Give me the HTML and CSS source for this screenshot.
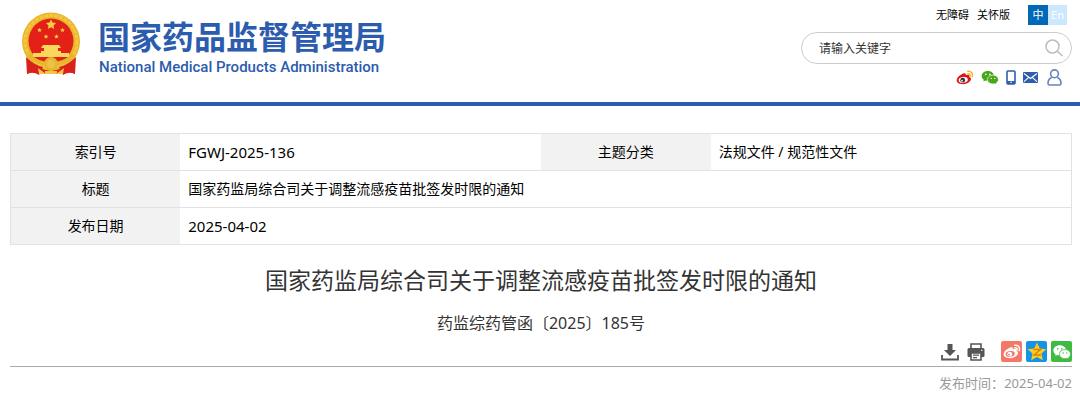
FILE: index.html
```html
<!DOCTYPE html>
<html lang="zh-CN">
<head>
<meta charset="utf-8">
<meta name="viewport" content="width=device-width, initial-scale=1">
<title>国家药监局综合司关于调整流感疫苗批签发时限的通知</title>
<link rel="stylesheet" href="styles.css">
</head>
<body>
<svg width="0" height="0" class="defs" aria-hidden="true">
  <symbol id="weibo" viewBox="0 0 20 18">
    <path d="M8 4c2-1 3.500 0 2.800 2 3-1.200 4.800-.3 4 1.800 2 .6 2.600 2.400 1.200 4.400-2 2.900-6.500 4.300-10.500 3.600C1.800 15.100 0 12.800.8 10.300 1.700 7.600 5 5 8 4z" fill="var(--body)"/>
    <ellipse cx="8" cy="11.200" rx="5.200" ry="3.300" fill="var(--gap)" transform="rotate(-8 8 11.200)"/>
    <circle cx="7.400" cy="11.400" r="2.700" fill="var(--eye)"/>
    <circle cx="6.600" cy="12" r="1" fill="var(--gap)"/>
    <path d="M13.200 1.500c3.500-.6 6 2.300 5 5.900M13.300 4.300c1.700-.2 2.700.9 2.300 2.600" fill="none" stroke="var(--wave)" stroke-width="1.700" stroke-linecap="round"/>
  </symbol>
  <symbol id="wechat" viewBox="0 0 20 17">
    <path d="M7.500 1C3.500 1 .5 3.500.5 6.700c0 1.800 1 3.300 2.500 4.400L2.400 13l2.400-1.200c.9.300 1.800.4 2.700.4 4 0 7-2.400 7-5.500S11.500 1 7.500 1z" fill="var(--fg)"/>
    <path d="M13.400 5.800c-3.600 0-6.300 2.200-6.300 5.100s2.700 5 6.300 5c.8 0 1.500-.1 2.200-.3l2.100 1-.6-1.700c1.500-1 2.400-2.300 2.400-4 0-2.900-2.600-5.100-6.100-5.100z" fill="var(--fg)" stroke="var(--gap)" stroke-width=".8"/>
    <g fill="var(--gap)"><circle cx="5.200" cy="5" r=".9"/><circle cx="9.800" cy="5" r=".9"/><circle cx="11.400" cy="9.500" r=".8"/><circle cx="15.400" cy="9.500" r=".8"/></g>
  </symbol>
  <symbol id="star" viewBox="-10 -10 20 20"><path d="M0-9.500 2.800-3.500 9.300-2.800 4.500 1.600 5.800 8.200 0 5-5.800 8.200-4.500 1.600-9.300-2.800-2.800-3.500z"/></symbol>
</svg>

<header class="header">
  <a class="brand" href="#">
    <svg class="emblem" viewBox="0 0 60 64" role="img" aria-label="国徽">
      <path d="M8 43 6 62q8-4 14 0h20q7-4 14 0l-2-19z" fill="#df241c"/>
      <circle cx="30" cy="29.500" r="29" fill="#e9b62b"/>
      <circle cx="30" cy="29.500" r="26" fill="none" stroke="#f3c840" stroke-width="3" stroke-dasharray="4 1"/>
      <circle cx="30" cy="29" r="22.500" fill="#e32119"/>
      <g fill="#f6ce40"><use href="#star" x="24.500" y="7" width="11" height="11"/><use href="#star" x="16" y="15.500" width="5" height="5"/><use href="#star" x="39" y="15.500" width="5" height="5"/><use href="#star" x="22.500" y="22" width="5" height="5"/><use href="#star" x="33" y="22" width="5" height="5"/></g>
      <path d="M22 33h16l2 3H20zM23 36h14v3H23zM20 39h20v3H20zM12 41h36v4H12z" fill="#f9d75c"/>
      <path d="M10 45h40c-5 5-8 7-11 7H21c-4 0-8-3-11-7z" fill="#e32119"/>
      <path d="M7 43q9 9 23 9t23-9" fill="none" stroke="#e8b62d" stroke-width="4"/>
      <circle cx="30" cy="52" r="5.500" fill="#eec24a" stroke="#e8b62d" stroke-width="3"/>
      <path d="M5 45q8 8 17 10l-4 8q-6-4-12-1zM55 45q-8 8-17 10l4 8q6-4 12-1z" fill="#da211b"/>
      <path d="m17 56 8 6h-7zM43 56l-8 6h7zM24 59h12v3H24z" fill="#f3c744"/>
    </svg>
    <span class="brand-text">
      <span class="brand-cn">国家药品监督管理局</span>
      <span class="brand-en">National Medical Products Administration</span>
    </span>
  </a>
  <div class="tools">
    <nav class="top-links">
      <a href="#">无障碍</a>
      <a href="#">关怀版</a>
      <span class="lang"><a class="lang-cn" href="#">中</a><a class="lang-en" href="#">En</a></span>
    </nav>
    <form class="search">
      <input class="search-input" type="text" placeholder="请输入关键字" aria-label="请输入关键字">
      <button class="search-btn" type="button" aria-label="搜索">
        <svg width="18" height="18" viewBox="0 0 18 18" fill="none" stroke="#bcbcbc" stroke-width="1.500"><circle cx="7.500" cy="7.500" r="6.500"/><path d="m12 12 5.500 5"/></svg>
      </button>
    </form>
    <nav class="social">
      <a href="#" aria-label="微博"><svg class="weibo-red" width="18" height="16"><use href="#weibo"/></svg></a>
      <a href="#" aria-label="微信"><svg class="wechat-green" width="18" height="15"><use href="#wechat"/></svg></a>
      <a href="#" aria-label="手机"><svg width="10" height="15" viewBox="0 0 10 15"><rect x="1" y="1" width="8" height="13" rx="1" fill="#fff" stroke="#2b5fad" stroke-width="1.600"/><path d="M1 11h8v3H1z" fill="#2b5fad"/><circle cx="5" cy="12.300" r=".8" fill="#fff"/></svg></a>
      <a href="#" aria-label="邮箱"><svg width="15" height="11" viewBox="0 0 15 11"><rect width="15" height="11" rx="1" fill="#2b5fad"/><path d="m1 1.500 6.500 5 6.500-5M1 9.700l4.500-4M14 9.700l-4.500-4" fill="none" stroke="#fff" stroke-width="1.100"/></svg></a>
      <a class="user" href="#" aria-label="用户"><svg width="15" height="17" viewBox="0 0 15 17" fill="none" stroke="#6a83be" stroke-width="1.600"><circle cx="7.500" cy="4.800" r="3.900"/><path d="M4.700 8.500C2 9.700 1 12 1 14.300c0 1.200.5 1.700 1.500 1.700h10c1 0 1.500-.5 1.500-1.700 0-2.300-1-4.600-3.700-5.800"/></svg></a>
    </nav>
  </div>
</header>

<main class="main">
  <table class="info">
    <colgroup><col class="col-label"><col class="col-value"><col class="col-label"><col class="col-value"></colgroup>
    <tr><th scope="row">索引号</th><td class="latin">FGWJ-2025-136</td><th scope="row">主题分类</th><td>法规文件 / 规范性文件</td></tr>
    <tr><th scope="row">标题</th><td colspan="3">国家药监局综合司关于调整流感疫苗批签发时限的通知</td></tr>
    <tr><th scope="row">发布日期</th><td class="latin" colspan="3">2025-04-02</td></tr>
  </table>
  <h1 class="title">国家药监局综合司关于调整流感疫苗批签发时限的通知</h1>
  <p class="doc-no">药监综药管函〔2025〕185号</p>
  <div class="actions">
    <button class="action" type="button" aria-label="下载"><svg width="18" height="18" viewBox="0 0 18 18" fill="#555"><path d="M6.500 1h5v6H15l-6 6-6-6h3.500z"/><path d="M1 12v4.500h16V12" fill="none" stroke="#555" stroke-width="1.800"/></svg></button>
    <button class="action" type="button" aria-label="打印"><svg width="18" height="18" viewBox="0 0 18 18"><path d="M4 5V1h10v4" fill="#fff" stroke="#555" stroke-width="1.600"/><rect x=".5" y="5" width="17" height="9" rx="1.500" fill="#555"/><path d="M4 10h10v7H4z" fill="#fff" stroke="#555" stroke-width="1.600"/><path d="M6 12.200h6M6 14.600h4" stroke="#555" stroke-width="1.200"/><path d="M14 7.300h1.500" stroke="#fff"/></svg></button>
    <a class="share share-weibo" href="#" aria-label="分享到微博"><svg width="18" height="16"><use href="#weibo"/></svg></a>
    <a class="share share-qzone" href="#" aria-label="分享到QQ空间"><svg width="20" height="20" viewBox="-10 -10 20 20"><use href="#star" x="-10" y="-10" width="20" height="20" fill="#fdcb1e"/><path d="M-3.500-2.500H3.500L-3 3H4" fill="none" stroke="#d98208" stroke-width="1.400"/></svg></a>
    <a class="share share-wechat" href="#" aria-label="分享到微信"><svg width="18" height="16"><use href="#wechat"/></svg></a>
  </div>
  <p class="date">发布时间：<time datetime="2025-04-02">2025-04-02</time></p>
</main>
</body>
</html>
```
FILE: styles.css
```css
* { box-sizing: border-box; }
body {
  margin: 0;
  background: #fff;
  color: #000;
  font-family: "Noto Sans", "Noto Sans CJK SC", sans-serif;
  font-size: 14px;
}
a { color: inherit; text-decoration: none; }
button { padding: 0; border: 0; background: none; cursor: pointer; }
svg { display: block; }
.defs { position: absolute; }

.header {
  display: flex;
  justify-content: space-between;
  align-items: flex-start;
  padding: 5px 8px 16px 21px;
  border-bottom: 4px solid #2b5cad;
}
.brand { display: flex; gap: 17px; padding-top: 7px; color: #2b5cad; }
.emblem { width: 60px; height: 64px; }
.brand-text { display: flex; flex-direction: column; }
.brand-cn {
  font: bold 32px/46px "Noto Sans CJK SC", sans-serif;
}
.brand-en { padding-left: 1px; font: 500 15px/18px Roboto, sans-serif; }

.tools { width: 271px; }
.top-links {
  display: flex;
  justify-content: flex-end;
  gap: 8px;
  padding-right: 5px;
  font-size: 11px;
  line-height: 20px;
}
.lang { display: flex; margin-left: 10px; text-align: center; color: #fff; }
.lang-cn { width: 20px; background: #0068b7; }
.lang-en { width: 19px; background: #cce8ff; }
.search {
  display: flex;
  align-items: center;
  height: 32px;
  margin-top: 7px;
  padding: 0 8px 0 17px;
  border: 1px solid #ccc;
  border-radius: 16px;
}
.search-input {
  flex: 1;
  min-width: 0;
  padding: 0;
  border: 0;
  outline: 0;
  background: none;
  font: inherit;
  font-size: 12px;
}
.search-input::placeholder { color: #333; opacity: 1; }
.social {
  display: flex;
  justify-content: flex-end;
  align-items: center;
  gap: 7px;
  padding: 5px 10px 0 0;
}
.user { margin-left: 2px; }
.weibo-red { --body: #e2131a; --gap: #fff; --eye: #333; --wave: #f5b52c; }
.wechat-green { --fg: #46a818; --gap: #fff; }

.main { padding: 27px 8px 0 10px; }
.info {
  width: 100%;
  table-layout: fixed;
  border-collapse: collapse;
  border: 1px solid #e2e2e2;
}
.col-label { width: 16%; }
.col-value { width: 34%; }
.info tr { border-bottom: 1px solid #e2e2e2; }
.info th, .info td { height: 37px; padding: 0 8px; line-height: 24px; }
.info th { background: #f2f2f2; font-weight: normal; text-align: center; }
.info .latin { font-size: 15px; }

.title {
  margin: 18px 0 0;
  color: #333;
  font-size: 23px;
  font-weight: normal;
  line-height: 34px;
  text-align: center;
}
.doc-no {
  margin: 14px 0 0;
  color: #333;
  font-size: 16px;
  line-height: 24px;
  text-align: center;
}
.actions {
  display: flex;
  justify-content: flex-end;
  align-items: center;
  gap: 4px;
  margin-top: 6px;
  padding-bottom: 4px;
  border-bottom: 1px solid #aaa;
}
.action { margin-right: 4px; }
.share {
  display: grid;
  place-items: center;
  width: 21px;
  height: 21px;
  border-radius: 2px;
}
.share-weibo { margin-left: 8px; background: #f57767; --body: #fff; --gap: #f57767; --eye: #fff; --wave: #fff; }
.share-qzone { background: #1593e6; }
.share-wechat { background: #3dbb43; --fg: #fff; --gap: #3dbb43; }
.date {
  margin: 6px 0 0;
  color: #999;
  font-size: 13px;
  line-height: 20px;
  text-align: right;
}
```
